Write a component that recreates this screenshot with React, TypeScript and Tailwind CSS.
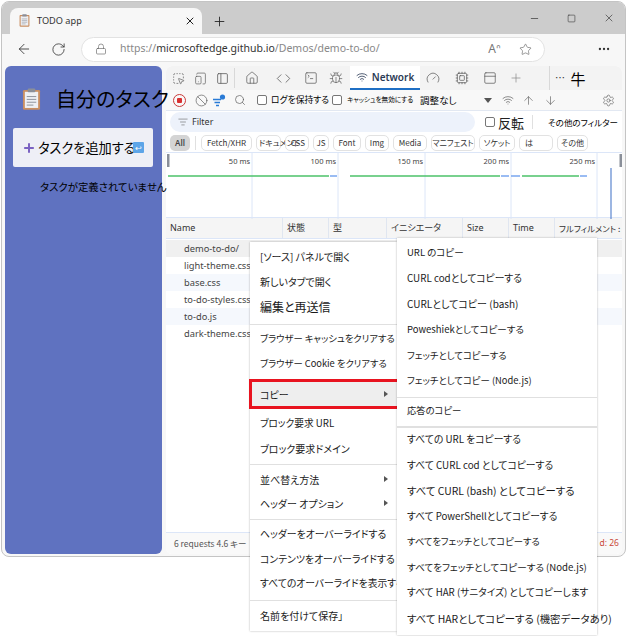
import React from "react";
import { ArrowLeft, RotateCw, Lock, Star, Plus, X, Minus, Square, MoreHorizontal, Home, Code, Bug, Wifi, Gauge, Cpu, PanelTop, Search, Ban, Settings, ArrowUp, ArrowDown, ListFilter, SquareTerminal, PanelLeft, MousePointerSquareDashed, TabletSmartphone } from "lucide-react";

const jp = "font-['Noto_Sans_CJK_JP','Noto_Sans',sans-serif] [font-feature-settings:'palt']";

function Clipboard({ s = 14 }: { s?: number }) {
  return (
    <svg className="shrink-0" width={s} height={s * 1.2} viewBox="0 0 20 24">
      <rect x="1" y="2" width="18" height="21" rx="1.5" fill="#c98f62" />
      <rect x="3" y="4" width="14" height="17" fill="#eef0f4" />
      <rect x="6" y="0.5" width="8" height="4" rx="1" fill="#8b8f99" />
      <path d="M5 9h10M5 12h10M5 15h10M5 18h7" stroke="#8b8f99" strokeWidth="1" />
    </svg>
  );
}

const pills: [string, number, string?][] = [
  ["Fetch/XHR", 51],
  ["ドキュメント", 25, "justify-start pl-[2px]"],
  ["CSS", 24, "justify-end pr-[3px]"],
  ["JS", 16],
  ["Font", 28],
  ["Img", 24],
  ["Media", 34],
  ["マニフェスト", 44],
  ["ソケット", 36],
  ["は", 34, "justify-start pl-[5px]"],
  ["その他", 31],
];

const rows: [string, string][] = [
  ["demo-to-do/", "bg-[#f0f0f0]"],
  ["light-theme.css", "bg-white"],
  ["base.css", "bg-[#f5f8fd]"],
  ["to-do-styles.css", "bg-white"],
  ["to-do.js", "bg-[#f5f8fd]"],
  ["dark-theme.css", "bg-white"],
];

const cols = "grid grid-cols-[117px_46px_58px_76px_46px_46px_1fr]";

function Item({ h, size = "text-[10px]", arrow, children }: { h: string; size?: string; arrow?: boolean; children: React.ReactNode }) {
  return (
    <div className={`${h} ${size} flex items-center justify-between pl-[10px] pr-[9px] text-[#1a1a1a] whitespace-nowrap`}>
      <span>{children}</span>
      {arrow && <span className="w-0 h-0 border-y-[3px] border-y-transparent border-l-[4px] border-l-[#555]" />}
    </div>
  );
}
const Sep = () => <div className="h-px bg-[#e0e0e0]" />;

function QueryIcon() {
  return (
    <svg className="ml-[4px] shrink-0" width="14" height="13" viewBox="0 0 14 13">
      <path d="M1 5.5h8M2.5 8.5h5.5M4 11.5h3" stroke="#2a7bd6" strokeWidth="1.3" fill="none" />
      <circle cx="10.5" cy="3" r="2.6" fill="#2a7bd6" />
    </svg>
  );
}

function Chart() {
  const g = "#4cc26a", b = "#7aa7f0";
  return (
    <svg className="absolute inset-0" width="456" height="66" viewBox="0 0 456 66">
      {[86, 172, 259, 345, 431].map((x) => (
        <path key={x} d={`M${x} 0V66`} stroke="#dce6f8" strokeWidth="1" />
      ))}
      <path d="M2 23H163M184 23H334M356 23H413" stroke={g} strokeWidth="1.6" />
      <path d="M164 23H171M335 23H343M345 23H354M414 23H421" stroke={b} strokeWidth="1.6" />
      <path d="M445 15V66" stroke="#5b85cf" strokeWidth="1.2" />
      <rect x="1" y="1" width="2.5" height="13" fill="#8a8f99" />
      <rect x="453.5" y="1" width="2.5" height="13" fill="#8a8f99" />
    </svg>
  );
}

export default function App() {
  const ic = "text-[#5f5f5f] shrink-0";
  return (
    <div className={`relative w-[627px] h-[636px] bg-white overflow-hidden ${jp}`}>
      <div className="ml-px mt-px w-[625px] h-[556px] rounded-[8px] border border-[#c4c4c4] flex flex-col overflow-hidden bg-[#f7f7f7]">
        {/* tab strip */}
        <div className="h-[32px] shrink-0 bg-[#cccccc] flex items-end pl-[8px]">
          <div className="w-[192px] h-[26px] bg-[#f7f7f7] rounded-t-[8px] flex items-center pl-[9px] pr-[6px] gap-[7px]">
            <Clipboard s={11} />
            <span className="font-['Noto_Sans',sans-serif] text-[9.2px] text-[#333] flex-1">TODO app</span>
            <X size={12} className="text-[#222]" />
          </div>
          <div className="w-[34px] h-[26px] flex items-center justify-center"><Plus size={15} className="text-[#222]" strokeWidth={1.4} /></div>
          <div className="flex-1" />
          <div className="h-[32px] flex items-center gap-[27px] pr-[10px] text-[#333]">
            <Minus size={11} strokeWidth={1.5} />
            <Square size={9} strokeWidth={1.5} />
            <X size={12} strokeWidth={1.3} />
          </div>
        </div>
        {/* toolbar */}
        <div className="h-[30px] shrink-0 flex items-center pl-[14px] pr-[8px] bg-[#f7f7f7]">
          <ArrowLeft size={16} strokeWidth={1.3} className="text-[#333]" />
          <RotateCw size={15} strokeWidth={1.3} className="text-[#333] ml-[19px]" />
          <div className="ml-[15px] w-[464px] h-[25px] rounded-full bg-white border border-[#e2e2e2] flex items-center pl-[13px] pr-[12px]">
            <Lock size={12} strokeWidth={1.3} className="text-[#666]" />
            <span className="ml-[13px] font-['Noto_Sans',sans-serif] text-[10.5px] text-[#888] whitespace-nowrap flex-1">https://<span className="text-[#333]">microsoftedge.github.io</span>/Demos/demo-to-do/</span>
            <span className="font-['Noto_Sans',sans-serif] text-[12px] text-[#777]">Aᐢ</span>
            <Star size={13} strokeWidth={1.2} className="ml-[18px] text-[#666]" />
          </div>
          <div className="flex-1" />
          <MoreHorizontal size={14} className="text-[#333]" />
          <div className="w-[6px]" />
        </div>
        {/* content */}
        <div className="flex-1 min-h-0 flex pl-[3px] pr-[3px] pb-[2px] pt-[2px] gap-[4px]">
          {/* app */}
          <div className="relative z-10 w-[157px] shrink-0 rounded-[6px] bg-[#5f72c0] flex flex-col text-black">
            <div className="h-[62px] pt-[4px] flex items-center pl-[17px] gap-[15px] whitespace-nowrap">
              <Clipboard s={19} />
              <span className="text-[20px] leading-none">自分のタスク</span>
            </div>
            <div className="ml-[8px] w-[140px] h-[39px] rounded-[2px] bg-[#eeeff6] flex items-center pl-[9px] whitespace-nowrap">
              <Plus size={14} strokeWidth={3.4} className="text-[#7a62c2] shrink-0" />
              <span className="ml-[2px] text-[13.2px]">タスクを追加する</span>
              <span className="-ml-[3px] shrink-0 w-[11px] h-[11px] rounded-[1px] bg-[#5da5e8] text-white text-[8px] leading-[11px] text-center">↩</span>
            </div>
            <div className="mt-[11px] ml-[35px] text-[10.4px] whitespace-nowrap leading-[18px]">タスクが定義されていません</div>
          </div>
          {/* devtools */}
          <div className="flex-1 min-w-0 flex flex-col bg-white text-[#333] rounded-[6px] overflow-hidden">
            <div className="h-[24px] shrink-0 flex items-center bg-[#f3f3f3] pl-[6px] relative">
              <MousePointerSquareDashed size={13} strokeWidth={1.3} className={ic} />
              <TabletSmartphone size={13} strokeWidth={1.3} className={`${ic} ml-[9px]`} />
              <PanelLeft size={13} strokeWidth={1.5} className={`${ic} ml-[9px]`} />
              <div className="w-px h-[20px] bg-[#d8d8d8] ml-[5px]" />
              <Home size={14} strokeWidth={1.3} className={`${ic} ml-[10px]`} />
              <Code size={15} strokeWidth={1.3} className={`${ic} ml-[17px]`} />
              <SquareTerminal size={14} strokeWidth={1.3} className={`${ic} ml-[13px]`} />
              <Bug size={14} strokeWidth={1.2} className={`${ic} ml-[11px]`} />
              <div className="ml-[7px] w-[70px] h-[24px] bg-white border-b-2 border-[#1f6fc4] flex items-center justify-center gap-[4px] font-['Noto_Sans',sans-serif] font-semibold text-[10px] text-[#2b3a55]">
                <Wifi size={12} strokeWidth={1.6} />Network
              </div>
              <Gauge size={14} strokeWidth={1.3} className={`${ic} ml-[6px]`} />
              <Cpu size={14} strokeWidth={1.3} className={`${ic} ml-[15px]`} />
              <PanelTop size={14} strokeWidth={1.3} className={`${ic} ml-[14px]`} />
              <Plus size={14} strokeWidth={1.2} className="text-[#888] ml-[12px]" />
              <div className="w-px h-[24px] bg-[#d8d8d8] ml-[26px]" />
              <span className="ml-[5px] text-[#333] text-[10px] leading-none tracking-[0.5px]">…</span>
              <span className="ml-[5px] text-[15px] leading-none text-black">牛</span>
            </div>
            <div className="h-[21px] shrink-0 flex items-center bg-[#f8f8f8] border-b border-[#e2e8f2] pl-[7px] pr-[7px] whitespace-nowrap">
              <span className="w-[13px] h-[13px] shrink-0 rounded-full border border-[#c93a3a] flex items-center justify-center"><span className="w-[5px] h-[5px] bg-[#d93030] rounded-[1px]" /></span>
              <Ban size={13} strokeWidth={1.3} className={`${ic} ml-[9px]`} />
              <QueryIcon />
              <Search size={12} strokeWidth={1.4} className={`${ic} ml-[8px]`} />
              <span className="ml-[11px] w-[10px] h-[10px] rounded-[2px] border border-[#777] bg-white" />
              <span className="ml-[4px] text-[8.8px] text-black">ログを保持する</span>
              <span className="ml-[3px] w-[10px] h-[10px] rounded-[2px] border border-[#777] bg-white" />
              <span className="ml-[5px] text-[6.6px] text-black w-[68px]">キャッシュを無効にする</span>
              <span className="ml-[5px] text-[9.5px] text-black">調整なし</span>
              <span className="ml-[28px] w-0 h-0 border-x-[4px] border-x-transparent border-t-[5px] border-t-[#555]" />
              <Wifi size={12} strokeWidth={1.4} className={`${ic} ml-[10px]`} />
              <ArrowUp size={13} strokeWidth={1.2} className={`${ic} ml-[8px]`} />
              <ArrowDown size={13} strokeWidth={1.2} className={`${ic} ml-[9px]`} />
              <div className="flex-1" />
              <Settings size={13} strokeWidth={1.2} className={ic} />
            </div>
            <div className="h-[22px] shrink-0 flex items-center pl-[4px] whitespace-nowrap">
              <div className="w-[305px] h-[20px] rounded-full bg-[#edf2fb] flex items-center pl-[8px] gap-[4px]">
                <ListFilter size={10} strokeWidth={1.4} className={ic} />
                <span className="font-['Noto_Sans',sans-serif] text-[9px] text-[#333]">Filter</span>
              </div>
              <span className="ml-[10px] w-[10px] h-[10px] rounded-[2px] border border-[#777]" />
              <span className="ml-[3px] text-[13px] text-[#222] leading-none">反転</span>
              <div className="ml-[8px] w-px h-[14px] bg-[#e0e0e0]" />
              <span className="ml-[15px] text-[8.5px] text-black">その他のフィルター</span>
            </div>
            <div className="h-[19px] shrink-0 flex items-center pl-[4px] gap-[4px] whitespace-nowrap">
              <span className="w-[20px] h-[16px] rounded-[5px] bg-[#d4d4d4] text-[8px] font-semibold font-['Noto_Sans',sans-serif] flex items-center justify-center text-[#444]">All</span>
              <div className="w-px h-[14px] bg-[#e0e0e0] mx-[1px]" />
              {pills.map(([t, w, x]) => (
                <span key={t} style={{ width: w }} className={`h-[16px] rounded-[5px] border border-[#e2e2e2] text-[8px] text-[#333] flex items-center overflow-visible shrink-0 ${x || "justify-center"}`}>{t}</span>
              ))}
            </div>
            <div className="relative h-[66px] shrink-0 border-y border-[#dce6f8] grid grid-cols-[86px_86px_87px_86px_86px_1fr] font-['Noto_Sans',sans-serif] text-[7.5px] text-[#444]">
              {["50 ms", "100 ms", "150 ms", "200 ms", "250 ms"].map((t) => (
                <div key={t} className="text-right pr-[2px] pt-[3px]">{t}</div>
              ))}
              <Chart />
            </div>
            <div className={`${cols} h-[21px] shrink-0 bg-[#f5f5f5] border-b border-[#dce6f8] text-[9px] text-[#333] items-center`}>
              {["Name", "状態", "型", "イニシエータ", "Size", "Time", "フルフィルメント :"].map((t, i) => (
                <div key={t} className={`h-full flex items-center pl-[4px] whitespace-nowrap ${i === 6 ? "text-[8.4px]" : ""} ${i < 6 ? "border-r border-[#e0e6f0]" : ""} ${i === 0 || i === 4 || i === 5 ? "font-['Noto_Sans',sans-serif]" : ""}`}>{t}</div>
              ))}
            </div>
            <div className="flex-1 min-h-0 relative pt-[1px]">
              {rows.map(([n, bg]) => (
                <div key={n} className={`${cols} h-[17px] ${bg} font-['Noto_Sans',sans-serif] text-[9.3px] text-[#444] items-center`}>
                  <div className="pl-[18px] whitespace-nowrap">{n}</div>
                </div>
              ))}
            </div>
            <div className="h-[22px] shrink-0 border-t border-[#dce6f8] flex items-center pl-[8px] pr-[3px] justify-between whitespace-nowrap bg-[#f9f9f9] text-[8.5px] text-[#555]">
              <span>6 requests 4.6 キー</span>
              <span className="font-['Noto_Sans',sans-serif] text-[#c9483a]">d: 26</span>
            </div>
          </div>
        </div>
      </div>

      {/* first context menu */}
      <div className="absolute z-20 left-[250px] top-[242px] w-[147px] h-[389px] bg-white shadow-[0_0_2px_rgba(0,0,0,0.3)] flex flex-col">
        <div className="h-px" />
        <Item h="h-[26px]">[ソース] パネルで開く</Item>
        <Item h="h-[25px]">新しいタブで開く</Item>
        <Item h="h-[26px]" size="text-[12px]">編集と再送信</Item>
        <div className="h-[4px]" /><Sep /><div className="h-[3px]" />
        <Item h="h-[22px]" size="text-[9.3px]">ブラウザー キャッシュをクリアする</Item>
        <Item h="h-[27px]" size="text-[9.3px]">ブラウザー Cookie をクリアする</Item>
        <div className="h-[2px]" />
        <div className="relative h-[30px] bg-[#eeeeee]">
          <Item h="h-[30px]" arrow>コピー</Item>
          <div className="absolute -left-px top-0 w-[151px] h-[30px] border-[3px] border-[#e8131f]" />
        </div>
        <Item h="h-[29px]" size="text-[9.7px]">ブロック要求 URL</Item>
        <Item h="h-[21px]">ブロック要求ドメイン</Item>
        <div className="h-[5px]" /><Sep />
        <Item h="h-[28px]" arrow>並べ替え方法</Item>
        <Item h="h-[20px]" arrow>ヘッダー オプション</Item>
        <div className="h-[6px]" /><Sep />
        <Item h="h-[28px]" size="text-[9.9px]">ヘッダーをオーバーライドする</Item>
        <Item h="h-[22px]" size="text-[9.9px]">コンテンツをオーバーライドする</Item>
        <Item h="h-[26px]" size="text-[9.8px]">すべてのオーバーライドを表示する</Item>
        <div className="h-[4px]" /><Sep />
        <Item h="h-[28px]">名前を付けて保存」</Item>
      </div>

      {/* second context menu */}
      <div className="absolute z-30 left-[397px] top-[238px] w-[200px] h-[397px] bg-white shadow-[0_0_2px_rgba(0,0,0,0.3)] flex flex-col">
        <div className="h-px" />
        <Item h="h-[26px]" size="text-[9.5px]">URL のコピー</Item>
        <Item h="h-[26px]" size="text-[9.8px]">CURL codとしてコピーする</Item>
        <Item h="h-[24px]">CURLとしてコピー (bash)</Item>
        <Item h="h-[28px]" size="text-[9.5px]">Poweshiekとしてコピーする</Item>
        <Item h="h-[24px]" size="text-[9.4px]">フェッチとしてコピーする</Item>
        <Item h="h-[26px]" size="text-[9.4px]">フェッチとしてコピー (Node.js)</Item>
        <div className="h-[4px]" /><Sep />
        <Item h="h-[26px]" size="text-[9.3px]">応答のコピー</Item>
        <div className="h-[2px]" />
        <div className="h-[2px] bg-[#e0e0e0]" />
        <Item h="h-[23px]" size="text-[9.8px]">すべての URL をコピーする</Item>
        <Item h="h-[28px]" size="text-[9.8px]">すべて CURL cod としてコピーする</Item>
        <Item h="h-[24px]" size="text-[10.4px]">すべて CURL (bash) としてコピーする</Item>
        <Item h="h-[26px]" size="text-[9.7px]">すべて PowerShellとしてコピーする</Item>
        <Item h="h-[26px]" size="text-[9.3px]">すべてをフェッチとしてコピーする</Item>
        <Item h="h-[24px]" size="text-[9.6px]">すべてをフェッチとしてコピーする (Node.js)</Item>
        <Item h="h-[26px]" size="text-[9.7px]">すべて HAR (サニタイズ) としてコピーします</Item>
        <Item h="h-[28px]" size="text-[10.4px]">すべて HARとしてコピーする (機密データあり)</Item>
      </div>
    </div>
  );
}
